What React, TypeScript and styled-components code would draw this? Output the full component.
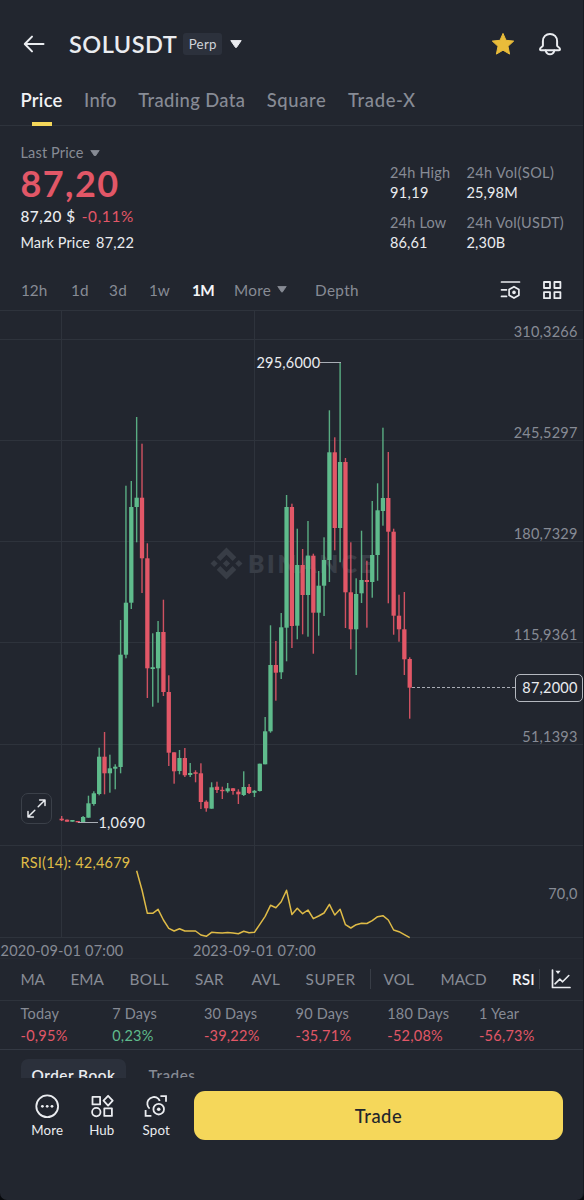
import React from "react";
import styled, { createGlobalStyle } from "styled-components";

const c = {
  bg: "#22262f",
  line: "#2e333c",
  grid: "#2e333c",
  text: "#eaecf0",
  muted: "#878b95",
  red: "#e25767",
  green: "#5fbb8c",
  yellow: "#f5d75a",
  gold: "#dfbb47",
};
const family = `Lato, "Open Sans", sans-serif`;

const Global = createGlobalStyle`
  * { box-sizing: border-box; }
  body { margin: 0; background: #07090c; }
  button { font: inherit; color: inherit; background: none; border: 0; padding: 0; }
`;

const Screen = styled.main`
  width: 584px;
  height: 1200px;
  overflow: hidden;
  background: ${c.bg};
  border-right: 1px solid #171a21;
  border-radius: 0 0 7px 7px;
  color: ${c.text};
  font-family: ${family};
  font-size: 14.5px;
  white-space: nowrap;
  display: flex;
  flex-direction: column;
`;

/* Every label carries its own tracking */
const Label = styled.span<{ $track?: number }>`
  letter-spacing: ${(p) => p.$track ?? 0.15}px;
`;

/* ---------- header ---------- */
const Header = styled.header`
  display: flex;
  align-items: center;
  height: 56px;
  margin-top: 16px;
  padding: 0 21px 0 23px;
`;
const Symbol = styled.h1`
  margin: 0 0 0 24px;
  font-size: 23.5px;
  font-weight: 600;
  line-height: 44px;
  letter-spacing: 0.5px;
`;
const Badge = styled.span`
  margin: 0 8px 0 6px;
  width: 39px;
  height: 22px;
  border-radius: 3px;
  background: #2c313c;
  color: #cfd3da;
  font-size: 13.3px;
  line-height: 22px;
  text-align: center;
  letter-spacing: 0.3px;
`;
const HeaderActions = styled.div`
  margin-left: auto;
  display: flex;
  gap: 23px;
`;

/* ---------- tabs ---------- */
const Tabs = styled.nav`
  display: flex;
  gap: 21.5px;
  height: 54px;
  padding-left: 20.5px;
  border-bottom: 1px solid ${c.line};
`;
const Tab = styled.button<{ $on?: boolean; $track: number }>`
  position: relative;
  height: 56px;
  font-size: 18.4px;
  line-height: 56px;
  font-weight: ${(p) => (p.$on ? 600 : 500)};
  letter-spacing: ${(p) => p.$track}px;
  color: ${(p) => (p.$on ? "#f1f2f5" : c.muted)};
  &::after {
    content: "";
    display: ${(p) => (p.$on ? "block" : "none")};
    position: absolute;
    left: 50%;
    bottom: 2px;
    width: 20px;
    height: 4px;
    margin-left: -10px;
    background: ${c.yellow};
  }
`;

/* ---------- quote ---------- */
const Quote = styled.section`
  display: flex;
  justify-content: space-between;
  height: 144px;
  padding: 17px 18.5px 0 20.5px;
`;
const Prices = styled.div`
  display: flex;
  flex-direction: column;
`;
const PriceKind = styled.div`
  display: flex;
  align-items: center;
  gap: 6px;
  line-height: 20px;
  color: ${c.muted};
`;
const LastPrice = styled.div`
  font-size: 36px;
  font-weight: 700;
  line-height: 40px;
  letter-spacing: 1.4px;
  color: ${c.red};
`;
const Change = styled.div`
  display: flex;
  gap: 6px;
  font-size: 15.3px;
  line-height: 27px;
  font-weight: 500;
`;
const Down = styled(Label)`
  color: ${c.red};
  font-weight: 400;
`;
const Mark = styled.div`
  display: flex;
  gap: 6px;
  line-height: 25px;
`;
const Stats = styled.dl`
  display: grid;
  grid-template-columns: 76.5px 98px;
  row-gap: 10px;
  align-content: start;
  margin: 20px 0 0;
`;
const StatName = styled.dt`
  line-height: 20px;
  color: ${c.muted};
`;
const StatValue = styled.dd`
  margin: 0;
  line-height: 20px;
`;

/* ---------- intervals ---------- */
const Intervals = styled.div`
  display: grid;
  grid-template-columns: 50px 38px 40px 43px 42px 81px 185px 42px 20px;
  align-items: center;
  height: 41px;
  padding: 0 0 1px 21px;
  border-bottom: 1px solid ${c.line};
  font-size: 15.3px;
  color: ${c.muted};
`;
const Interval = styled.button<{ $on?: boolean; $track: number }>`
  display: flex;
  align-items: center;
  gap: 6px;
  line-height: 20px;
  letter-spacing: ${(p) => p.$track}px;
  font-weight: ${(p) => (p.$on ? 700 : 400)};
  color: ${(p) => (p.$on ? "#f4f5f8" : c.muted)};
`;

/* ---------- charts ---------- */
const ChartPane = styled.section`
  position: relative;
  height: 535px;
  border-bottom: 1px solid ${c.line};
`;
const RsiPane = styled.section`
  height: 92px;
  border-bottom: 1px solid ${c.line};
`;
const Plot = styled.svg`
  display: block;
  font-family: ${family};
  font-size: 14.5px;
  letter-spacing: 0.2px;
`;
const Expand = styled.button`
  position: absolute;
  left: 21px;
  top: 482px;
  width: 31px;
  height: 31px;
  display: grid;
  place-items: center;
  border: 1px solid #3b4049;
  border-radius: 7px;
  background: ${c.bg};
`;
const Dates = styled.div`
  display: grid;
  grid-template-columns: 192.5px 1fr;
  height: 21px;
  padding: 2px 0 0 0.5px;
  border-bottom: 1px solid #262a33;
  font-size: 14.5px;
  line-height: 21px;
  color: ${c.muted};
`;

/* ---------- indicators ---------- */
const Indicators = styled.div`
  display: grid;
  grid-template-columns: 50px 59px 65.5px 56.5px 54px 64px 14px 57px 71.5px 27px 12px 20px;
  align-items: center;
  height: 42px;
  padding: 0 0 1px 20.5px;
  border-bottom: 1px solid ${c.line};
  font-size: 15.3px;
  color: ${c.muted};
`;
const Indicator = styled.button<{ $on?: boolean; $track: number }>`
  text-align: left;
  line-height: 20px;
  letter-spacing: ${(p) => p.$track}px;
  font-weight: ${(p) => (p.$on ? 600 : 400)};
  color: ${(p) => (p.$on ? "#f4f5f8" : c.muted)};
`;
const Rule = styled.i`
  width: 1px;
  height: 20px;
  background: #383d46;
`;

/* ---------- performance ---------- */
const Performance = styled.div`
  display: grid;
  grid-template-columns: repeat(6, 91.7px);
  height: 49px;
  padding: 2px 0 0 20.5px;
  border-bottom: 1px solid #343943;
  line-height: 22px;
`;
const Period = styled.div`
  color: ${c.muted};
`;
const Result = styled.div<{ $up?: boolean }>`
  letter-spacing: 0.25px;
  color: ${(p) => (p.$up ? c.green : c.red)};
`;

/* ---------- order book ---------- */
const Book = styled.div`
  display: flex;
  align-items: flex-start;
  height: 28px;
  padding: 9px 0 0 21px;
  overflow: hidden;
`;
const BookTab = styled.button<{ $on?: boolean }>`
  flex: none;
  width: ${(p) => (p.$on ? 105 : 92)}px;
  height: 32px;
  line-height: 32px;
  border-radius: 7px;
  font-size: 15.3px;
  letter-spacing: 0.5px;
  font-weight: ${(p) => (p.$on ? 600 : 500)};
  color: ${(p) => (p.$on ? c.text : c.muted)};
  background: ${(p) => (p.$on ? "#2b303b" : "transparent")};
`;

/* ---------- footer ---------- */
const Footer = styled.footer`
  display: flex;
  align-items: flex-start;
  padding: 13px 20px 0 20px;
`;
const Shortcut = styled.button`
  width: 54.5px;
  display: flex;
  flex-direction: column;
  align-items: center;
  gap: 1px;
  padding-top: 2px;
  font-size: 13.3px;
  line-height: 20px;
`;
const TradeButton = styled.button`
  width: 369px;
  height: 49px;
  margin-left: 10.5px;
  border-radius: 11px;
  background: ${c.yellow};
  color: #23262c;
  font-size: 18.4px;
  font-weight: 500;
  letter-spacing: 0.5px;
`;

/* ---------- icons ---------- */
const Stroke = styled.svg`
  display: block;
  fill: none;
  stroke: ${c.text};
  stroke-width: 2;
  stroke-linecap: round;
  stroke-linejoin: round;
  .solid { fill: ${c.text}; stroke: none; }
`;
const Caret = ({ w, h, fill }: { w: number; h: number; fill: string }) => (
  <svg width={w} height={h} viewBox="0 0 12 8">
    <path d="M.8.6h10.4L6.6 7.3q-.6.7-1.2 0z" fill={fill} stroke={fill} strokeWidth="1" strokeLinejoin="round" />
  </svg>
);

/* ---------- data ---------- */
const tabs: [string, number][] = [
  ["Price", 0.25], ["Info", 0.2], ["Trading Data", 0.35], ["Square", 0.65], ["Trade-X", 0.65],
];
const stats: [string, string, number, number][] = [
  ["24h High", "91,19", 0.2, 0.4],
  ["24h Vol(SOL)", "25,98M", 0.38, 0.15],
  ["24h Low", "86,61", 0.2, 0.15],
  ["24h Vol(USDT)", "2,30B", 0.28, 0.2],
];
const periods: [string, string][] = [
  ["Today", "-0,95%"], ["7 Days", "0,23%"], ["30 Days", "-39,22%"],
  ["90 Days", "-35,71%"], ["180 Days", "-52,08%"], ["1 Year", "-56,73%"],
];
/* [rising, wick top, body top, body bottom, wick bottom] for each month */
const candles: [number, number, number, number, number][] = [
  [0, 816, 818.7, 820.3, 821], [0, 819.5, 819.7, 821.7, 821.7], [1, 820, 820, 821.7, 821.7], [0, 821, 821, 822.3, 822.3],
  [1, 816, 817, 822, 822], [1, 795.7, 803.3, 817.7, 817.7], [1, 791.3, 793.3, 804, 805.7], [1, 747.7, 756.7, 794, 795.3],
  [0, 732, 756.7, 773.3, 794.3], [1, 754.7, 768.3, 773.3, 792.7], [1, 764.3, 766.7, 768.7, 789.3], [1, 620, 654.7, 767, 773.3],
  [1, 485.7, 602.7, 654.7, 658.3], [1, 481, 507, 602.7, 609], [1, 417, 497.7, 507, 542.3], [0, 443.7, 497.7, 558.3, 593],
  [0, 543.3, 558.3, 668.3, 698], [1, 633.3, 667.2, 669, 706.7], [1, 621, 632, 668.3, 702.7], [0, 599.7, 632, 692, 696],
  [0, 675.3, 692, 752.7, 766], [0, 752.3, 752.3, 771.3, 783.7], [1, 750, 758, 771, 774.3], [0, 748, 758, 775.3, 777],
  [1, 763, 773, 775, 777], [0, 770.3, 772.3, 773.8, 782.3], [0, 763.3, 773.3, 802, 809], [0, 800.3, 801.7, 808.3, 811.7],
  [1, 782.3, 787.3, 808.7, 808.7], [0, 781.7, 786.7, 790, 793], [0, 786.7, 789.8, 791.2, 799], [1, 783, 788.3, 791.3, 792.7],
  [0, 788, 788.3, 791, 794.7], [0, 789.3, 791.7, 794.3, 804], [1, 771.3, 787, 795, 796], [0, 784, 787, 793, 794],
  [1, 790, 790.8, 792.8, 797], [1, 763.7, 763.7, 791, 791.5], [1, 717, 731.3, 764.3, 764.3], [1, 625.3, 665, 731.3, 732.7],
  [0, 641, 665, 672.7, 700.7], [1, 613, 627.3, 672.3, 679], [1, 495, 507, 627.7, 661.3], [0, 503.7, 507, 626, 648],
  [1, 528.7, 565, 625.7, 639.3], [0, 549, 565, 595, 634.3], [1, 521, 555.7, 595, 636.7], [0, 553.7, 555.7, 612.7, 653.7],
  [1, 571, 585.7, 612.7, 635.7], [1, 537.3, 560, 585.7, 616], [1, 410.3, 452.3, 560, 582], [0, 437.3, 452.3, 528, 550.3],
  [1, 362, 462, 528, 562.3], [0, 458, 462, 592.3, 628], [0, 542.3, 592.3, 629.3, 649.3], [1, 578.3, 594, 629.3, 675],
  [1, 530.7, 580, 593.3, 603], [0, 560.7, 580, 582, 627.7], [1, 501, 555, 582, 597.7], [1, 483.3, 510.3, 555, 580.7],
  [1, 427.7, 498, 511, 525.7], [0, 452, 498, 531.7, 603.3], [0, 528.7, 531.7, 615.7, 634.7], [0, 594.7, 615.7, 629.3, 641.7],
  [0, 592, 629.3, 659.3, 675], [0, 657.3, 659, 687.7, 718.7],
];
const rsi = [
  870.7, 890, 913.3, 913.3, 909.3, 920, 928.3, 931, 928.7, 931, 931, 931, 935, 936.3, 932.3, 932.7, 933, 932.5, 933, 933.7,
  931.3, 932.7, 932.3, 924.3, 916.3, 905.3, 907.7, 901.7, 890.3, 914.5, 908.3, 913.7, 910, 918.7, 916, 913, 904.3, 915,
  909.3, 924.7, 928, 924.7, 923.3, 923.5, 920.7, 916.7, 915.7, 920, 930, 931.7, 934.7, 937.6,
];
const monthX = (i: number) => 61.7 + i * 5.354;
const levels: [number, string][] = [
  [339, "310,3266"], [440, "245,5297"], [541, "180,7329"], [642, "115,9361"], [744, "51,1393"],
];

const PriceChart = () => (
  <Plot width="583" height="534" viewBox="0 311 583 534">
    {levels.map(([y, t]) => (
      <g key={t}>
        <path d={`M0 ${y + 0.5}H583`} stroke={c.grid} />
        <text x="577.5" y={y - 2.3} textAnchor="end" fill={c.muted}>{t}</text>
      </g>
    ))}
    <path d="M61.5 311V845M254.5 311V845" stroke={c.grid} />
    <g fill="#383d46">
      <path
        transform="translate(210.5 547.5) scale(1.333)"
        d="M16.624 13.9202l2.7175 2.7154-7.353 7.353-7.353-7.352 2.7175-2.7164 4.6355 4.6595 4.6356-4.6595zm4.6366-4.6366L24 12l-2.7154 2.7164L18.5682 12l2.6924-2.7164zm-9.272.001l2.7163 2.6914-2.7164 2.7174v-.001L9.2721 12l2.7164-2.7154zm-9.2722-.001L5.4088 12l-2.6914 2.6924L0 12l2.7164-2.7164zM11.9885.0115l7.353 7.329-2.7174 2.7154-4.6356-4.6356-4.6355 4.6595-2.7174-2.7154 7.353-7.353z"
      />
      <text x="248" y="572.5" fontSize="24.5" fontWeight="800" letterSpacing="2.7">BINANCE</text>
    </g>
    {candles.map(([up, wt, bt, bb, wb], i) => (
      <g key={i} fill={up ? c.green : c.red}>
        <rect x={monthX(i) - 0.7} y={wt} width="1.4" height={wb - wt} opacity="0.9" />
        <rect x={monthX(i) - 2.15} y={bt} width="4.3" height={bb - bt} />
      </g>
    ))}
    <g stroke="#a9adb5">
      <path d="M320 362.5H341M78 822.5H98" />
      <path d="M412 687.5H515" strokeDasharray="3 2" />
    </g>
    <g fill={c.text}>
      <text x="256.5" y="367.7">295,6000</text>
      <text x="98.5" y="828">1,0690</text>
      <rect x="515.5" y="674.5" width="67" height="27" rx="4.5" fill={c.bg} stroke="#b4b8bf" />
      <text x="577.5" y="693.3" textAnchor="end">87,2000</text>
    </g>
  </Plot>
);

/* The line's last point rests on the pane's lower border */
const RsiPlot = styled(Plot)`
  overflow: visible;
`;
const RsiChart = () => (
  <RsiPlot width="583" height="91" viewBox="0 846 583 91">
    <path d="M61.5 846V937M254.5 846V937" stroke={c.grid} />
    <text x="20.5" y="867.5" fill={c.gold}>RSI(14): 42,4679</text>
    <text x="577.5" y="899" textAnchor="end" fill={c.muted}>70,0</text>
    <polyline
      points={rsi.map((y, i) => `${monthX(i + 14)},${y}`).join(" ")}
      fill="none" stroke={c.gold} strokeWidth="1.5" strokeLinejoin="round"
    />
  </RsiPlot>
);

export default function App() {
  return (
    <Screen>
      <Global />
      <Header>
        <Stroke width="22" height="18" viewBox="0 0 22 18">
          <path d="M9 1.6 1.8 9 9 16.4M2 9h18.5" />
        </Stroke>
        <Symbol>SOLUSDT</Symbol>
        <Badge>Perp</Badge>
        <Caret w={12} h={8} fill={c.text} />
        <HeaderActions>
          <svg width="24" height="24" viewBox="0 0 24 24">
            <path
              d="M12 1.4 15 8.3l7.7.8-5.7 5.2 1.6 7.8L12 18.2l-6.6 3.9L7 14.3 1.3 9.1 9 8.3z"
              fill="#e9bc3a" stroke="#e9bc3a" strokeWidth="1" strokeLinejoin="round"
            />
          </svg>
          <Stroke width="24" height="24" viewBox="0 0 24 24">
            <path d="M4.9 9.2C4.9 4.8 8 1.9 12 1.9s7.1 2.9 7.1 7.3v4.3c0 1.3 2.9 1.9 2.9 3.7 0 .6-.4 1-1 1H3c-.6 0-1-.4-1-1 0-1.8 2.9-2.4 2.9-3.7z" />
            <path d="M7.6 18.4c.6 2.6 2.2 3.9 4.4 3.9s3.8-1.3 4.4-3.9" />
          </Stroke>
        </HeaderActions>
      </Header>

      <Tabs>
        {tabs.map(([t, k], i) => <Tab key={t} $on={i === 0} $track={k}>{t}</Tab>)}
      </Tabs>

      <Quote>
        <Prices>
          <PriceKind><Label>Last Price</Label><Caret w={10} h={6.5} fill={c.muted} /></PriceKind>
          <LastPrice>87,20</LastPrice>
          <Change><Label $track={0.5}>87,20 $</Label><Down $track={0.7}>-0,11%</Down></Change>
          <Mark><Label $track={0.1}>Mark Price</Label><Label $track={0.2}>87,22</Label></Mark>
        </Prices>
        <Stats>
          {stats.map(([n, v, nk, vk]) => (
            <div key={n}>
              <StatName><Label $track={nk}>{n}</Label></StatName>
              <StatValue><Label $track={vk}>{v}</Label></StatValue>
            </div>
          ))}
        </Stats>
      </Quote>

      <Intervals>
        <Interval $track={0}>12h</Interval>
        <Interval $track={0.2}>1d</Interval>
        <Interval $track={0.4}>3d</Interval>
        <Interval $track={-0.2}>1w</Interval>
        <Interval $on $track={-0.6}>1M</Interval>
        <Interval $track={0.3}>More<Caret w={10} h={6.5} fill={c.muted} /></Interval>
        <Interval $track={0.35}>Depth</Interval>
        <Stroke width="21" height="20" viewBox="0 0 21 20">
          <path d="M1.5 2h18M1.5 9.8h5M1.5 16.4h5" strokeWidth="1.7" />
          <path d="m14 6.7 4.9 2.9v5.6L14 18.1l-4.9-2.9V9.6z" strokeWidth="1.7" />
          <circle className="solid" cx="14" cy="12.4" r="1.8" />
        </Stroke>
        <Stroke width="20" height="20" viewBox="0 0 20 20">
          <path d="M2 2h6v6H2zM12.4 2h6v6h-6zM2 12.2h6v6H2zM12.4 12.2h6v6h-6z" strokeWidth="1.8" />
        </Stroke>
      </Intervals>

      <ChartPane>
        <PriceChart />
        <Expand aria-label="Expand">
          <Stroke width="21" height="21" viewBox="0 0 21 21">
            <path d="M12.2 8.8 18.5 2.5M13.6 2h5.4v5.4M8.8 12.2 2.5 18.5M2 13.6V19h5.4" strokeWidth="1.5" />
          </Stroke>
        </Expand>
      </ChartPane>
      <RsiPane><RsiChart /></RsiPane>
      <Dates>
        <Label $track={0.25}>2020-09-01 07:00</Label>
        <Label $track={0.25}>2023-09-01 07:00</Label>
      </Dates>

      <Indicators>
        <Indicator $track={-0.3}>MA</Indicator>
        <Indicator $track={0}>EMA</Indicator>
        <Indicator $track={0.4}>BOLL</Indicator>
        <Indicator $track={0.3}>SAR</Indicator>
        <Indicator $track={0.3}>AVL</Indicator>
        <Indicator $track={0.6}>SUPER</Indicator>
        <Rule />
        <Indicator $track={0.1}>VOL</Indicator>
        <Indicator $track={0}>MACD</Indicator>
        <Indicator $on $track={0.1}>RSI</Indicator>
        <Rule />
        <Stroke width="20" height="20" viewBox="0 0 20 20">
          <path d="M1.5 1v17.5H19" strokeWidth="1.7" />
          <path d="m4 14.8 4.8-4.6 2.8 2.6 6.2-6.3" strokeWidth="1.6" />
          <path className="solid" d="M4.4 1.8h5.2L7 5z" />
        </Stroke>
      </Indicators>

      <Performance>
        {periods.map(([name, value]) => (
          <div key={name}>
            <Period><Label $track={0.2}>{name}</Label></Period>
            <Result $up={value[0] !== "-"}>{value}</Result>
          </div>
        ))}
      </Performance>

      <Book>
        <BookTab $on>Order Book</BookTab>
        <BookTab>Trades</BookTab>
      </Book>

      <Footer>
        <Shortcut>
          <Stroke width="26" height="26" viewBox="0 0 26 26">
            <circle cx="13.2" cy="13.3" r="10.9" strokeWidth="1.8" />
            <g className="solid">
              <circle cx="8.4" cy="13.3" r="1.4" /><circle cx="13.2" cy="13.3" r="1.4" /><circle cx="18" cy="13.3" r="1.4" />
            </g>
          </Stroke>
          <Label>More</Label>
        </Shortcut>
        <Shortcut>
          <Stroke width="26" height="26" viewBox="0 0 26 26">
            <path d="M3.5 3.8h7.6v7.6H3.5zM15.3 15.3h7.6v7.6h-7.6zM19.1 2.8l4.6 4.9-4.6 4.9-4.6-4.9z" strokeWidth="1.8" />
            <circle cx="7.3" cy="19.1" r="4.2" strokeWidth="1.8" />
          </Stroke>
          <Label $track={0.1}>Hub</Label>
        </Shortcut>
        <Shortcut>
          <Stroke width="26" height="26" viewBox="0 0 26 26">
            <path d="M17.4 3.2h5.6v5.6M2.6 17v5.8h5.8" strokeWidth="1.8" strokeLinecap="butt" strokeLinejoin="miter" />
            <path d="M6.6 15.6C4.2 13.6 3.6 9.8 5.2 7.2 7.4 3.6 12.5 3 15.2 5.6c.7.7 1.2 1.5 1.5 2.4" strokeWidth="1.8" strokeLinecap="butt" />
            <circle cx="15.7" cy="16.2" r="5.3" strokeWidth="1.8" />
            <circle className="solid" cx="15.7" cy="16.2" r="1.8" />
          </Stroke>
          <Label>Spot</Label>
        </Shortcut>
        <TradeButton>Trade</TradeButton>
      </Footer>
    </Screen>
  );
}
